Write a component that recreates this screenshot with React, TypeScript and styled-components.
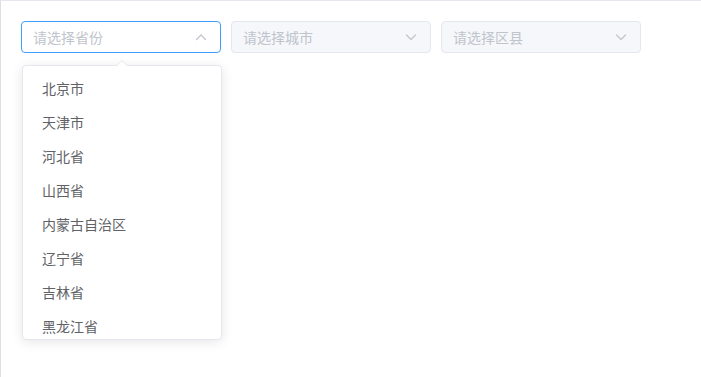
import styled, { createGlobalStyle } from "styled-components"

const GlobalStyle = createGlobalStyle`
    html, body {
        margin: 0;
        padding: 0;
        background: #fff;
    }
    body {
        font-family: "Noto Sans CJK SC", "Noto Sans", sans-serif;
        -webkit-font-smoothing: antialiased;
    }
`

const provinces = ["北京市", "天津市", "河北省", "山西省", "内蒙古自治区", "辽宁省", "吉林省", "黑龙江省"]

const Chevron: React.FC<{ up?: boolean }> = ({ up }) => (
    <svg width="12" height="12" viewBox="0 0 12 12" fill="none">
        <path
            d={up ? "M1.5 8.5 L6 4 L10.5 8.5" : "M1.5 4 L6 8.5 L10.5 4"}
            stroke="#c0c4cc"
            strokeWidth="1.2"
            strokeLinecap="round"
            strokeLinejoin="round"
        />
    </svg>
)

const Select: React.FC<{ placeholder: string; open?: boolean; disabled?: boolean }> = ({ placeholder, open, disabled }) => (
    <SelectBox open={open} disabled={disabled}>
        <Placeholder>{placeholder}</Placeholder>
        <ArrowWrap>
            <Chevron up={open} />
        </ArrowWrap>
    </SelectBox>
)

export default function App() {
    return (
        <>
            <GlobalStyle />
            <Page>
                <Row>
                    <SelectWrap>
                        <Select placeholder="请选择省份" open />
                        <Dropdown>
                            <Caret />
                            <List>
                                {provinces.map((p) => (
                                    <Item key={p}>{p}</Item>
                                ))}
                            </List>
                        </Dropdown>
                    </SelectWrap>
                    <Select placeholder="请选择城市" disabled />
                    <Select placeholder="请选择区县" disabled />
                </Row>
            </Page>
        </>
    )
}

const Page = styled.div`
    box-sizing: border-box;
    width: 701px;
    height: 377px;
    border-top: 1px solid #e4e7ed;
    border-left: 1px solid #dcdfe6;
    padding: 20px;
`

const Row = styled.div`
    display: flex;
    gap: 10px;
`

const SelectWrap = styled.div`
    position: relative;
`

const SelectBox = styled.div<{ open?: boolean; disabled?: boolean }>`
    box-sizing: border-box;
    width: 200px;
    height: 32px;
    display: flex;
    align-items: center;
    justify-content: space-between;
    padding: 0 13px 0 11px;
    border-radius: 4px;
    border: 1px solid ${({ open, disabled }) => (open ? "#409eff" : disabled ? "#e4e7ed" : "#dcdfe6")};
    background: ${({ disabled }) => (disabled ? "#f5f7fa" : "#fff")};
`

const Placeholder = styled.span`
    font-size: 14px;
    color: #c0c4cc;
    line-height: 30px;
`

const ArrowWrap = styled.span`
    display: flex;
    align-items: center;
`

const Dropdown = styled.div`
    position: absolute;
    top: 44px;
    left: 1px;
    width: 200px;
    box-sizing: border-box;
    border: 1px solid #e4e7ed;
    border-radius: 4px;
    background: #fff;
    box-shadow: 0 2px 12px 0 rgba(0, 0, 0, 0.1);
    z-index: 10;
`

const Caret = styled.div`
    position: absolute;
    top: -6px;
    left: 93px;
    width: 0;
    height: 0;
    border-left: 6px solid transparent;
    border-right: 6px solid transparent;
    border-bottom: 6px solid #e4e7ed;

    &::after {
        content: "";
        position: absolute;
        top: 1px;
        left: -5px;
        border-left: 5px solid transparent;
        border-right: 5px solid transparent;
        border-bottom: 5px solid #fff;
    }
`

const List = styled.ul`
    list-style: none;
    margin: 0;
    padding: 5px 0 0;
    height: 268px;
    overflow: hidden;
    border-radius: 4px;
`

const Item = styled.li`
    height: 34px;
    line-height: 34px;
    padding: 0 19px;
    font-size: 14px;
    color: #606266;
    white-space: nowrap;
`
